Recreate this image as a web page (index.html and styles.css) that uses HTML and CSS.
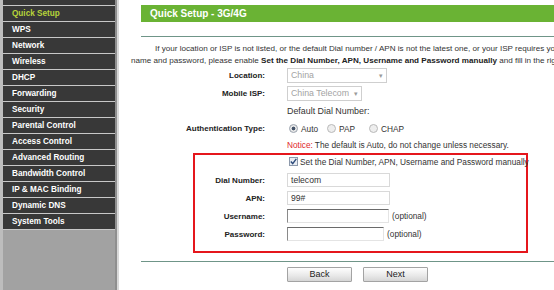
FILE: index.html
```html
<!DOCTYPE html>
<html>
<head>
<meta charset="utf-8">
<title>Quick Setup - 3G/4G</title>
<link rel="stylesheet" href="styles.css">
</head>
<body>
<div class="page">
  <nav class="sidebar">
    <ul class="menu">
      <li>Status</li>
      <li class="active">Quick Setup</li>
      <li>WPS</li>
      <li>Network</li>
      <li>Wireless</li>
      <li>DHCP</li>
      <li>Forwarding</li>
      <li>Security</li>
      <li>Parental Control</li>
      <li>Access Control</li>
      <li>Advanced Routing</li>
      <li>Bandwidth Control</li>
      <li>IP &amp; MAC Binding</li>
      <li>Dynamic DNS</li>
      <li>System Tools</li>
    </ul>
  </nav>
  <main class="main">
    <div class="content">
      <div class="title">Quick Setup - 3G/4G</div>
      <div class="rule"></div>
      <p class="intro">If your location or ISP is not listed, or the default Dial number / APN is not the latest one, or your ISP requires you to enter a new user<br>name and password, please enable <b>Set the Dial Number, APN, Username and Password manually</b> and fill in the right parameters.</p>
      <div class="form">
        <div class="row h17"><span class="label">Location:</span><span class="value"><span class="select w-loc"><span class="sel-text">China</span><span class="arrow">&#9662;</span></span></span></div>
        <div class="row"><span class="label">Mobile ISP:</span><span class="value"><span class="select w-isp"><span class="sel-text">China Telecom</span><span class="arrow">&#9662;</span></span></span></div>
        <div class="row"><span class="label"></span><span class="value dial-default">Default Dial Number:</span></div>
        <div class="row h17"><span class="label">Authentication Type:</span><span class="value radios"><span class="opt"><span class="radio on"></span>Auto</span><span class="opt"><span class="radio"></span>PAP</span><span class="opt"><span class="radio"></span>CHAP</span></span></div>
        <div class="row h16"><span class="label"></span><span class="value"><span class="notice">Notice:</span> The default is Auto, do not change unless necessary.</span></div>
      </div>
      <div class="manual">
        <div class="row check-row"><span class="label"></span><span class="value"><span class="checkbox"><svg width="7" height="7" viewBox="0 0 7 7"><path d="M0.8 3.6 L2.7 5.6 L6.3 0.8" fill="none" stroke="#2b4a7a" stroke-width="1.4"/></svg></span>Set the Dial Number, APN, Username and Password manually</span></div>
        <div class="row"><span class="label">Dial Number:</span><span class="value"><span class="field w-dial">telecom</span></span></div>
        <div class="row"><span class="label">APN:</span><span class="value"><span class="field w-dial">99#</span></span></div>
        <div class="row"><span class="label">Username:</span><span class="value"><span class="field inset w-user"></span><span class="opt-text">(optional)</span></span></div>
        <div class="row"><span class="label">Password:</span><span class="value"><span class="field inset w-pass"></span><span class="opt-text">(optional)</span></span></div>
      </div>
      <div class="rule rule-bottom"></div>
      <div class="buttons">
        <button class="btn">Back</button>
        <button class="btn">Next</button>
      </div>
    </div>
  </main>
</div>
</body>
</html>
```
FILE: styles.css
```css
html, body {
  margin: 0;
  padding: 0;
  background: #fff;
}
body {
  font-family: "Liberation Sans", Arial, sans-serif;
  font-size: 8.3px;
  color: #333;
}
.page {
  display: flex;
  height: 290px;
  overflow: hidden;
}
.sidebar {
  width: 112px;
  flex: none;
  background: #a2a2a2;
  border-left: 3px solid #bdbdbd;
  border-right: 2px solid #8f8f8f;
}
.menu {
  list-style: none;
  margin: -11px 0 0;
  padding: 0;
  border-bottom: 1px solid #c8c8c8;
}
.menu li {
  height: 15px;
  line-height: 15px;
  border-top: 1px solid #c8c8c8;
  background: #383838;
  color: #fff;
  font-weight: bold;
  font-size: 8.2px;
  padding-left: 9px;
  white-space: nowrap;
}
.menu li.active {
  color: #b6d43a;
}
.main {
  flex: 1;
  min-width: 0;
  overflow: hidden;
  border-left: 2px solid #d9d9d9;
  padding-left: 12px;
}
.content {
  width: 760px;
}
.title {
  margin: 5px 0 0 10px;
  height: 17px;
  line-height: 17px;
  background: #6ab334;
  color: #fff;
  font-weight: bold;
  font-size: 10px;
  padding-left: 9px;
}
.rule {
  margin: 14px 0 0 10px;
  height: 1px;
  background: #6f9588;
}
.intro {
  margin: 6px 0 0;
  line-height: 12px;
  white-space: nowrap;
  text-indent: 24px;
  color: #333;
  font-size: 8.1px;
}
.intro b {
  color: #222;
}
.row {
  display: grid;
  grid-template-columns: 134px 1fr;
  column-gap: 22px;
  align-items: center;
  height: 18px;
}
.row.h17 { height: 17px; }
.row.h16 { height: 16px; }
.label {
  text-align: right;
  font-weight: bold;
  font-size: 8px;
  color: #222;
  white-space: nowrap;
}
.value {
  display: flex;
  align-items: center;
  white-space: nowrap;
}
.dial-default {
  font-size: 8.9px;
}
.select {
  position: relative;
  box-sizing: border-box;
  display: block;
  height: 15px;
  line-height: 13px;
  border: 1px solid #cfcfcf;
  background: #fff;
  color: #a3a3a3;
  padding-left: 3px;
  font-size: 8.8px;
}
.sel-text {
  display: block;
  overflow: hidden;
  white-space: nowrap;
  margin-right: 12px;
}
.w-loc { width: 100px; }
.w-isp { width: 75px; }
.arrow {
  position: absolute;
  right: 3px;
  top: 0;
  font-size: 7px;
  color: #9a9a9a;
}
.opt {
  display: flex;
  align-items: center;
  margin-right: 7px;
}
.opt:nth-child(2) { margin-right: 12px; }
.radio {
  box-sizing: border-box;
  width: 9px;
  height: 9px;
  border-radius: 50%;
  border: 1px solid #b9b9b9;
  background: #eee;
  margin: 0 3px 0 2px;
}
.radio.on {
  background: radial-gradient(circle, #44546a 0 1.6px, #e8e8e8 2.2px);
  border-color: #9aa2ad;
}
.notice {
  color: #e0262b;
  margin-right: 2px;
}
.manual {
  box-sizing: border-box;
  width: 335px;
  margin-left: 62px;
  border: 2px solid #e5161c;
  padding: 0 0 8px;
}
.manual .row {
  grid-template-columns: 70px 1fr;
}
.manual .check-row {
  height: 13px;
  margin-bottom: 3px;
}
.checkbox {
  box-sizing: border-box;
  display: flex;
  align-items: center;
  justify-content: center;
  width: 9px;
  height: 9px;
  border: 1px solid #8d99ab;
  background: #e9edf3;
  margin: 0 2px 0 2px;
}
.field {
  box-sizing: border-box;
  display: block;
  height: 14px;
  line-height: 12px;
  border: 1px solid #d9d9d9;
  background: #fff;
  color: #333;
  padding-left: 3px;
  font-size: 8.6px;
}
.w-dial { width: 103px; }
.w-user { width: 102px; }
.w-pass { width: 97px; }
.field.inset {
  border-top-color: #6a6a6a;
  border-left-color: #8a8a8a;
  border-right-color: #e4e4e4;
  border-bottom-color: #e4e4e4;
}
.opt-text {
  margin-left: 3px;
  color: #333;
}
.rule-bottom {
  margin-top: 8px;
}
.buttons {
  display: flex;
  gap: 11px;
  padding-left: 156px;
  margin-top: 5px;
}
.btn {
  box-sizing: border-box;
  width: 65px;
  height: 15px;
  padding: 0;
  border: 1px solid #a3a3a3;
  border-radius: 1px;
  background: linear-gradient(#fefefe, #e8e8e8 60%, #d6d6d6);
  font-family: inherit;
  font-size: 9px;
  color: #222;
  line-height: 13px;
}
```
